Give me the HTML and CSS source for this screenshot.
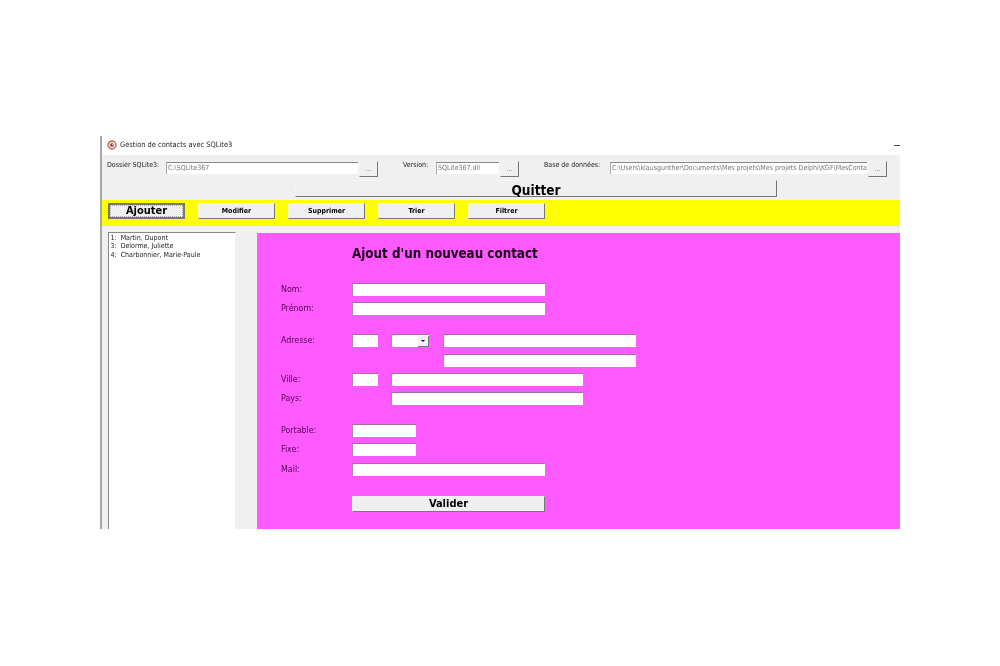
FILE: index.html
```html
<!DOCTYPE html>
<html lang="fr">
<head>
<meta charset="utf-8">
<title>Gestion de contacts avec SQLite3</title>
<link rel="stylesheet" href="styles.css">
</head>
<body>
<main class="window">
  <header class="titlebar">
    <svg class="appicon" viewBox="0 0 10 10" width="10" height="10"><circle cx="5" cy="5" r="4" fill="#f0d8d0" stroke="#d8604a" stroke-width="1.3"/><circle cx="5" cy="5" r="1.8" fill="#5a4a70"/><path d="M5 5L8 3" stroke="#fff" stroke-width="0.8"/></svg>
    <span class="titletext">Gestion de contacts avec SQLite3</span>
    <span class="minimize"></span>
  </header>
  <div class="panel">
    <div class="paths">
      <span class="pathlabel l1">Dossier SQLite3:</span>
      <span class="pathinput w1">C:\SQLite367</span>
      <button class="dots">...</button>
      <span class="pathlabel l2">Version:</span>
      <span class="pathinput w2">SQLite367.dll</span>
      <button class="dots">...</button>
      <span class="pathlabel l3">Base de données:</span>
      <span class="pathinput w3">C:\Users\klausgunther\Documents\Mes projets\Mes projets Delphi\KGF\MesContacts</span>
      <button class="dots">...</button>
    </div>
    <div class="quitrow"><button class="quit">Quitter</button></div>
    <nav class="toolbar">
      <button class="tool active">Ajouter</button>
      <button class="tool">Modifier</button>
      <button class="tool">Supprimer</button>
      <button class="tool">Trier</button>
      <button class="tool">Filtrer</button>
    </nav>
    <div class="content">
      <ul class="list">
        <li>1:&nbsp; Martin, Dupont</li>
        <li>3:&nbsp; Delorme, Juliette</li>
        <li>4:&nbsp; Charbonnier, Marie-Paule</li>
      </ul>
      <section class="form">
        <h1 class="formtitle">Ajout d'un nouveau contact</h1>
        <div class="group">
          <div class="row"><label>Nom:</label><span class="field wlong"></span></div>
          <div class="row"><label>Prénom:</label><span class="field wlong"></span></div>
        </div>
        <div class="group">
          <div class="row"><label>Adresse:</label><span class="field wnum"></span><span class="field wcombo"><span class="arrow"></span></span><span class="field wlong"></span></div>
          <div class="row"><label></label><span class="spacer-addr"></span><span class="field wlong"></span></div>
          <div class="row"><label>Ville:</label><span class="field wnum"></span><span class="field wcity"></span></div>
          <div class="row"><label>Pays:</label><span class="spacer-city"></span><span class="field wcity"></span></div>
        </div>
        <div class="group">
          <div class="row"><label>Portable:</label><span class="field wphone"></span></div>
          <div class="row"><label>Fixe:</label><span class="field wphone"></span></div>
          <div class="row"><label>Mail:</label><span class="field wlong"></span></div>
        </div>
        <button class="submit">Valider</button>
      </section>
    </div>
  </div>
</main>
</body>
</html>
```
FILE: styles.css
```css
* { box-sizing: border-box; }
html, body { margin: 0; height: 100%; background: #fff; overflow: hidden; }
body { padding: 136px 100px 0; font-family: "DejaVu Sans Condensed", "DejaVu Sans", sans-serif; font-stretch: condensed; }
button { font-family: inherit; font-stretch: inherit; padding: 0; margin: 0; color: #000; }

.window {
  width: 800px; height: 393px; display: flex; flex-direction: column;
  border-left: 2px solid #a8a8a8; filter: blur(0.4px);
}
.titlebar { height: 19px; display: flex; align-items: center; padding-left: 5px; background: #fff; flex: none; }
.appicon { flex: none; margin-top: -2px; }
.titletext { font-size: 7.4px; margin-left: 3px; color: #222; margin-top: -2px; }
.minimize { margin-left: auto; width: 6px; height: 1px; background: #444; margin-top: -1px; }

.panel { flex: 1; background: #f0f0f0; display: flex; flex-direction: column; min-height: 0; }

.paths { height: 25px; display: flex; align-items: flex-start; padding-top: 6px; flex: none; }
.pathlabel { font-size: 7px; color: #222; white-space: nowrap; }
.l1 { margin-left: 5px; width: 59px; }
.l2 { margin-left: 25px; width: 33px; }
.l3 { margin-left: 25px; width: 66px; }
.pathinput {
  height: 12px; background: #fff; border-top: 1px solid #888; border-left: 1px solid #aaa;
  font-size: 7px; line-height: 11px; color: #777; padding-left: 1px; overflow: hidden; white-space: nowrap; margin-top: 1px;
}
.w1 { width: 192px; }
.w2 { width: 63px; }
.w3 { width: 257px; }
.dots {
  width: 19px; height: 16px; margin-left: 1px; background: #f0f0f0; border: 1px solid #f4f4f4;
  border-right-color: #777; border-bottom-color: #777; font-size: 7px; line-height: 14px; color: #666;
}

.quitrow { flex: none; height: 20px; padding-left: 193px; }
.quit {
  display: block; width: 482px; height: 17px; background: #f0f0f0; border: 1px solid #f4f4f4;
  border-right-color: #777; border-bottom-color: #777; font-size: 13.5px; line-height: 16px; font-weight: 700; padding-top: 1px;
}

.toolbar {
  flex: none; height: 26px; background: #ffff00; display: flex; gap: 13px; padding: 3px 0 0 6px;
  border-bottom: 1px solid #e4e4a0;
}
.tool {
  width: 77px; height: 16px; background: #f0f0f0; border: 1px solid #fafad0;
  border-right-color: #777; border-bottom-color: #777; font-size: 7px; line-height: 14px; font-weight: 700;
}
.tool.active { border: 2px solid #777; font-size: 11px; line-height: 12px; outline: 1px dotted #aaa; outline-offset: -3px; }

.content { flex: 1; display: flex; min-height: 0; padding: 6px 0 0 6px; }
.list {
  list-style: none; margin: 0; padding: 1px 0 0 1.5px; width: 128px; background: #fff;
  border-top: 1px solid #888; border-left: 1.5px solid #888; border-right: 1px solid #eee; flex: none;
}
.list li { font-size: 7px; line-height: 8.3px; color: #222; white-space: nowrap; }

.form {
  margin: 1px 0 0 21px; flex: 1; background: #ff5aff; padding: 12px 0 0 24px;
  display: flex; flex-direction: column; gap: 19px; align-items: flex-start;
}
.formtitle { margin: 0 0 0 71px; padding-top: 1px; font-size: 13.3px; line-height: 16px; font-weight: 700; color: #1a001a; height: 19px; }
.group { display: flex; flex-direction: column; gap: 6.3px; }
.row { display: flex; height: 13px; }
.row label { width: 71px; flex: none; font-size: 8.8px; line-height: 9px; color: #500050; margin-top: 2px; }
.field {
  display: block; height: 13px; background: #fff; border-top: 1px solid #a070a0; border-left: 1px solid #b080b0;
  margin-right: 13.4px; position: relative; flex: none;
}
.wlong { width: 193px; }
.wnum { width: 26px; }
.wcombo { width: 38px; }
.wcity { width: 192px; }
.wphone { width: 64px; }
.spacer-addr { width: 90.8px; flex: none; }
.spacer-city { width: 39.4px; flex: none; }
.arrow {
  position: absolute; right: 0; top: 1px; width: 11px; height: 11px; background: #f0f0f0;
  border-right: 1px solid #777; border-bottom: 1px solid #777;
}
.arrow::after {
  content: ""; position: absolute; left: 3px; top: 4px; border: 2.5px solid transparent; border-top-color: #000; border-bottom: 0;
}
.submit {
  margin: 1px 0 0 71px; width: 193px; height: 16px; background: #f0f0f0; border: 1px solid #f4f4f4;
  border-right-color: #777; border-bottom-color: #777; font-size: 11px; line-height: 14px; font-weight: 700;
}
```
